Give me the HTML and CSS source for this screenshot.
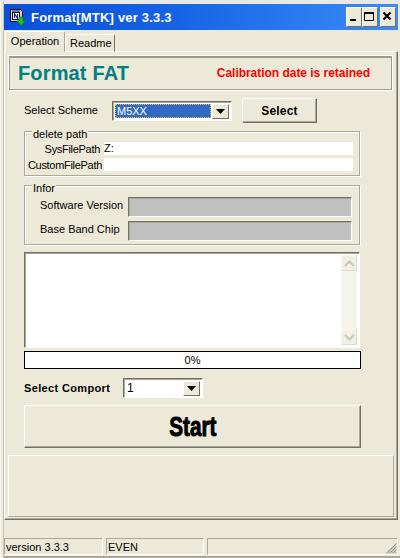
FILE: index.html
```html
<!DOCTYPE html>
<html>
<head>
<meta charset="utf-8">
<title>Format[MTK] ver 3.3.3</title>
<link rel="stylesheet" href="styles.css">
</head>
<body>
<div class="window">
  <div class="titlebar">
    <svg class="appicon" width="17" height="18" viewBox="0 0 17 18">
      <path d="M1.500 1.500h10l2 2v10h-12z" fill="#d4d0c4" stroke="#111" stroke-width="1"/>
      <rect x="3" y="2" width="8" height="2" fill="#77778a"/>
      <rect x="3.500" y="4.500" width="7" height="7" fill="#fff" stroke="#111" stroke-width="1"/>
      <path d="M5.500 10V6l3 4V6" fill="none" stroke="#1c1ca0" stroke-width="1.200"/>
      <path d="M10 9h4v4h2.500L12 17.500 7.500 13H10z" fill="#1fc22e" stroke="#0b6a12" stroke-width=".6"/>
    </svg>
    <span class="title">Format[MTK] ver 3.3.3</span>
    <div class="winbtns">
      <span class="winbtn"><svg width="16" height="20" viewBox="0 0 16 20"><rect x="4" y="12" width="6" height="2" fill="#000"/></svg></span>
      <span class="winbtn"><svg width="16" height="20" viewBox="0 0 16 20"><path d="M2.500 6.500h9v7h-9z" fill="none" stroke="#000"/><rect x="2" y="5" width="10" height="2" fill="#000"/></svg></span>
      <span class="winbtn close"><svg width="16" height="20" viewBox="0 0 16 20"><path d="M3.500 5.500l7 7M10.500 5.500l-7 7" stroke="#000" stroke-width="2.200"/></svg></span>
    </div>
  </div>
  <div class="tabs">
    <span class="tab active">Operation</span>
    <span class="tab">Readme</span>
  </div>
  <div class="page">
    <div class="banner">
      <span class="banner-title">Format FAT</span>
      <span class="banner-note">Calibration date is retained</span>
    </div>
    <div class="scheme-row">
      <span class="scheme-label">Select Scheme</span>
      <div class="combo scheme-combo">
        <span class="combo-value selected"><span class="focus">M5XX</span></span>
        <span class="combo-arrow"><svg width="9" height="5" viewBox="0 0 9 5"><path d="M0 0h9L4.500 5z" fill="#000"/></svg></span>
      </div>
      <button class="btn select-btn">Select</button>
    </div>
    <div class="group path-group">
      <span class="legend">delete path</span>
      <div class="path-row"><span class="path-label sys">SysFilePath</span><span class="path-input">Z:</span></div>
      <div class="path-row"><span class="path-label">CustomFilePath</span><span class="path-input"></span></div>
    </div>
    <div class="group info-group">
      <span class="legend">Infor</span>
      <div class="info-row"><span class="info-label">Software Version</span><span class="info-field"></span></div>
      <div class="info-row"><span class="info-label">Base Band Chip</span><span class="info-field"></span></div>
    </div>
    <div class="log">
      <div class="log-text"></div>
      <div class="scroll">
        <span class="scroll-btn"><svg width="11" height="7" viewBox="0 0 11 7"><path d="M1 6l4.500-4.500L10 6" fill="none" stroke="#c9c7ba" stroke-width="2"/></svg></span>
        <span class="scroll-btn"><svg width="11" height="7" viewBox="0 0 11 7"><path d="M1 1l4.500 4.500L10 1" fill="none" stroke="#c9c7ba" stroke-width="2"/></svg></span>
      </div>
    </div>
    <div class="progress">0%</div>
    <div class="port-row">
      <span class="port-label">Select Comport</span>
      <div class="combo port-combo">
        <span class="combo-value">1</span>
        <span class="combo-arrow"><svg width="9" height="5" viewBox="0 0 9 5"><path d="M0 0h9L4.500 5z" fill="#000"/></svg></span>
      </div>
    </div>
    <button class="btn start-btn"><span class="start-text">Start</span></button>
    <div class="bottom-panel"></div>
  </div>
  <div class="statusbar">
    <span class="status s1">version 3.3.3</span>
    <span class="status s2">EVEN</span>
    <span class="status s3"><svg class="grip" width="12" height="12" viewBox="0 0 12 12"><path d="M11.500 1.500l-10 10M11.500 4.500l-7 7M11.500 7.500l-4 4M11.500 10.500l-1 1" stroke="#a09c8c" stroke-width="1.200"/></svg></span>
  </div>
</div>
</body>
</html>
```
FILE: styles.css
```css
* { box-sizing: border-box; }
html, body { margin: 0; padding: 0; }
body { width: 400px; height: 558px; overflow: hidden; background: #ece9d8; }
.window {
  width: 400px; height: 558px; padding: 4px 2px 0 4px;
  display: flex; flex-direction: column;
  background: #ece9d8;
  font: 11px "Liberation Sans", Arial, sans-serif; color: #000;
  border-top: 1px solid #e4e8f4;
  box-shadow: inset 1px 0 0 #f8f7f0, inset 3px 0 0 #ece9d8, inset 4px 0 0 #c8c5b5, inset 0 -2px 0 #aca899;
}
.titlebar {
  height: 26px; margin-top: -1px; flex: none; display: flex; align-items: center;
  padding-left: 5px;
  background: linear-gradient(90deg, #0a50d8 0%, #1560e4 40%, #3a8cf6 100%);
}
.appicon { margin-right: 5px; flex: none; }
.title { color: #fff; font-weight: bold; font-size: 13px; letter-spacing: .2px; white-space: nowrap; }
.winbtns { margin-left: auto; display: flex; margin-right: 2px; }
.winbtn {
  width: 16px; height: 20px; background: #ece9d8; display: block; overflow: hidden;
  border: 1px solid; border-color: #fff #716f64 #716f64 #fff;
}
.winbtn svg { display: block; margin: -1px; }
.winbtn.close { margin-left: 2px; }
.tabs { display: flex; height: 21px; margin-top: 1px; padding-left: 1px; align-items: flex-end; flex: none; position: relative; z-index: 1; }
.tab {
  display: block; height: 18px; padding: 2px 4px 0; text-align: center;
  border: 1px solid; border-color: #fff #716f64 transparent #fff;
  border-radius: 2px 2px 0 0;
}
.tab.active { height: 21px; width: 60px; padding-top: 3px; background: #ece9d8; border-bottom-color: #ece9d8; border-right-color: #aca899; }
.tab:not(.active) { width: 50px; }
.page {
  width: 394px; height: 469px; margin-top: -1px; flex: none; padding: 3px;
  border: 1px solid; border-color: #fff #716f64 #716f64 #fff;
  box-shadow: inset -1px -1px 0 #aca899;
}
.banner {
  width: 385px; height: 36px; padding: 0 22px 0 9px; display: flex; align-items: center; justify-content: space-between;
  border: 1px solid #fff;
  box-shadow: inset 0 0 0 1px #9d9a8c, inset 0 2px 0 #9d9a8c;
}
.banner-title { color: #008080; font-size: 20px; font-weight: bold; letter-spacing: .15px; }
.banner-note { color: #f00; font-weight: bold; font-size: 12px; letter-spacing: -.03px; }
.scheme-row { height: 25px; margin: 7px 0 0 16px; display: flex; align-items: center; }
.scheme-label { width: 88px; flex: none; padding-bottom: 2px; }
.combo {
  height: 20px; display: flex; padding: 2px; background: #fff; flex: none;
  border: 1px solid; border-color: #716f64 #fff #fff #716f64;
  box-shadow: inset 1px 1px 0 #aca899;
}
.scheme-combo { width: 120px; }
.port-combo { width: 80px; }
.combo-value { flex: 1; font-size: 12px; line-height: 14px; padding-left: 1px; }
.combo-value.selected { background: #316ac5; color: #fff; padding: 0; display: flex; font-size: 11px; }
.focus { flex: 1; border: 1px dotted #f0c040; line-height: 12px; padding-left: 1px; }
.combo-arrow {
  width: 17px; height: 15px; margin-left: 1px; background: #ece9d8; flex: none; display: flex; align-items: center; justify-content: center;
  border: 1px solid; border-color: #fff #716f64 #716f64 #fff;
}
.btn {
  background: #ece9d8; padding: 0; display: block; color: #000; font-family: inherit;
  border: 1px solid; border-color: #fff #716f64 #716f64 #fff;
  box-shadow: inset -1px -1px 0 #aca899;
}
.select-btn { width: 75px; height: 25px; margin-left: 10px; font-weight: bold; font-size: 12px; letter-spacing: .2px; }
.group {
  position: relative; width: 336px; margin-left: 16px;
  border: 1px solid #aca899;
  box-shadow: 1px 1px 0 #fff, inset 1px 1px 0 #fff;
}
.legend { position: absolute; left: 7px; top: -4px; padding: 0 1px; background: #ece9d8; line-height: 13px; }
.path-group { height: 45px; margin-top: 8px; padding-top: 10px; }
.path-row { display: flex; height: 13px; margin-bottom: 3px; align-items: center; }
.path-label { width: 79px; padding-right: 2px; text-align: right; flex: none; white-space: nowrap; letter-spacing: -.3px; }
.path-label.sys { padding-right: 4px; }
.path-input { width: 249px; height: 13px; background: #fff; line-height: 13px; }
.info-group { height: 60px; margin-top: 9px; padding-top: 11px; }
.info-row { display: flex; height: 20px; margin-bottom: 4px; align-items: center; }
.info-label { width: 103px; padding: 0 0 5px 15px; flex: none; white-space: nowrap; }
.info-field {
  width: 224px; height: 20px; background: #c0c0c0;
  border: 1px solid; border-color: #716f64 #fff #fff #716f64;
  box-shadow: inset 1px 1px 0 #aca899;
}
.log {
  width: 336px; height: 96px; margin: 7px 0 0 16px; display: flex; padding: 2px; background: #fff;
  border: 1px solid; border-color: #716f64 #fff #fff #716f64;
  box-shadow: inset 1px 1px 0 #aca899;
}
.log-text { flex: 1; }
.scroll {
  width: 16px; display: flex; flex-direction: column; justify-content: space-between;
  background: #f4f3ec;
}
.scroll-btn {
  height: 16px; background: #f1efe6; display: flex; align-items: center; justify-content: center;
  border: 1px solid; border-color: #f8f7f1 #dedbc8 #dedbc8 #f8f7f1;
}
.progress {
  width: 337px; height: 18px; margin: 3px 0 0 16px; background: #fff; text-align: center; line-height: 16px;
  border: 1px solid #000;
}
.port-row { height: 20px; margin: 9px 0 0 16px; display: flex; align-items: center; }
.port-label { width: 99px; flex: none; font-weight: bold; letter-spacing: .35px; }
.start-btn {
  width: 337px; height: 43px; margin: 7px 0 0 16px;
  font-weight: bold; font-size: 28px;
}
.start-text { display: inline-block; transform: scaleX(.74); -webkit-text-stroke: 1px #000; }
.bottom-panel {
  width: 386px; height: 62px; margin-top: 7px;
  border: 1px solid; border-color: #fff #aca899 #aca899 #fff;
}
.statusbar { display: flex; margin-top: 18px; height: 20px; flex: none; gap: 3px; padding-bottom: 3px; }
.status {
  display: block; height: 17px; line-height: 16px; padding-left: 1px; position: relative;
  border: 1px solid; border-color: #aca899 #fff #fff #aca899;
}
.s1 { width: 99px; }
.s2 { width: 98px; }
.s3 { width: 191px; }
.grip { position: absolute; right: 0; bottom: 0; }
```
